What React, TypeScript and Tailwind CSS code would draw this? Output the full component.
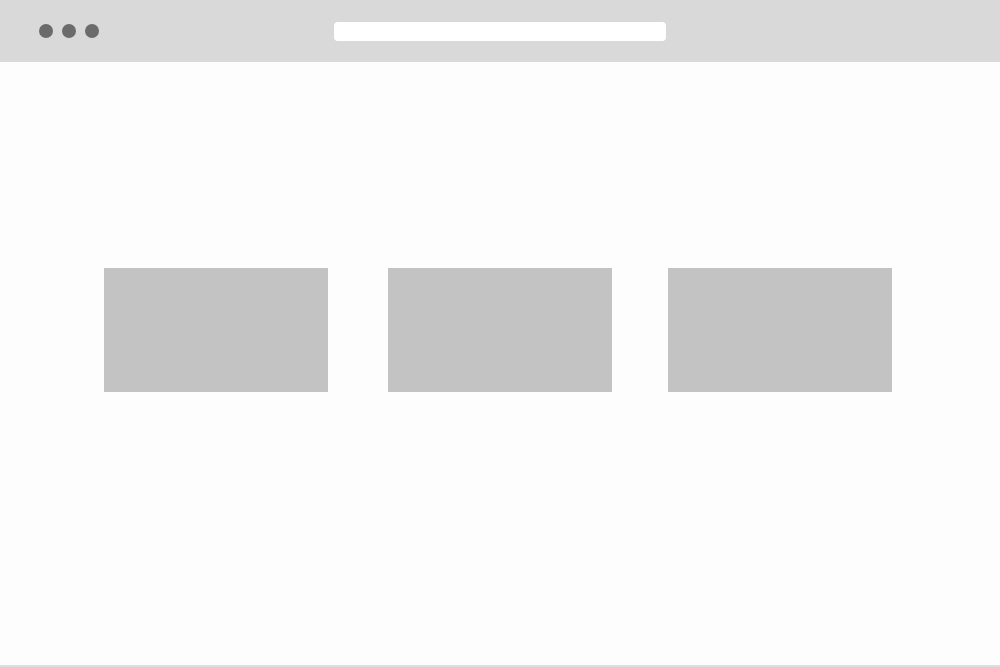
import React from 'react';

export default function App() {
  return (
    <div className="flex h-[667px] w-[1000px] flex-col bg-[#fdfdfd]">
      {/* Browser chrome */}
      <div className="flex h-[62px] shrink-0 items-center bg-[#d9d9d9] pl-[39px]">
        <div className="flex items-center gap-[9px]">
          <span className="h-[14px] w-[14px] rounded-full bg-[#6b6b6b]" />
          <span className="h-[14px] w-[14px] rounded-full bg-[#6b6b6b]" />
          <span className="h-[14px] w-[14px] rounded-full bg-[#6b6b6b]" />
        </div>
        <div className="ml-[235px] h-[19px] w-[332px] rounded-[4px] bg-white" />
      </div>

      {/* Page body */}
      <div className="flex flex-1 flex-col border-b-2 border-[#dedede]">
        <div className="mt-[206px] flex pl-[104px]">
          <div className="h-[124px] w-[224px] bg-[#c3c3c3]" />
          <div className="ml-[60px] h-[124px] w-[224px] bg-[#c3c3c3]" />
          <div className="ml-[56px] h-[124px] w-[224px] bg-[#c3c3c3]" />
        </div>
      </div>
    </div>
  );
}
